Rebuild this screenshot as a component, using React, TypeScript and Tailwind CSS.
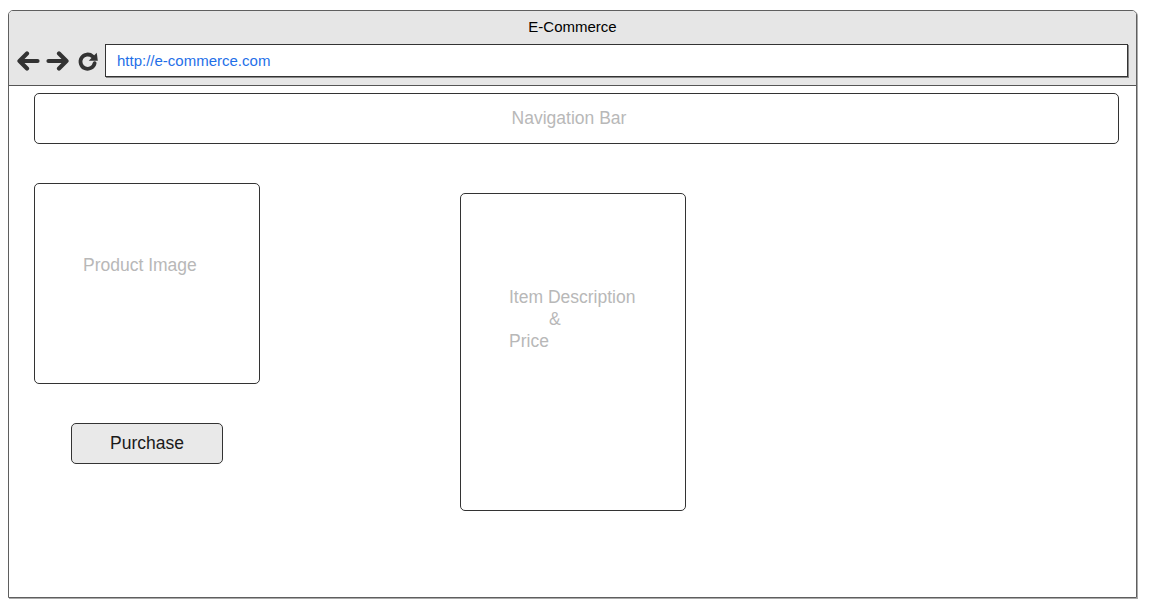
const font = { fontFamily: '"Liberation Sans", Arial, sans-serif' }

const BackIcon = () => (
    <svg width="23" height="20" viewBox="0 0 23 20" fill="none">
        <path d="M10 2.5 L2.5 10 L10 17.5 M3 10 H20.5" stroke="#333" strokeWidth="4.2" strokeLinecap="round" strokeLinejoin="round" />
    </svg>
)

const ForwardIcon = () => (
    <svg width="23" height="20" viewBox="0 0 23 20" fill="none">
        <path d="M13 2.5 L20.5 10 L13 17.5 M20 10 H2.5" stroke="#333" strokeWidth="4.2" strokeLinecap="round" strokeLinejoin="round" />
    </svg>
)

const ReloadIcon = () => (
    <svg width="21" height="21" viewBox="0 0 20 20" fill="none">
        <path d="M14.8 5.2 A6.8 6.8 0 1 0 16.8 11.5" stroke="#333" strokeWidth="3.6" strokeLinecap="round" fill="none" />
        <path d="M19.8 9.2 L11.2 9.2 L18.8 1.6 Z" fill="#333" />
    </svg>
)

export default function App() {
    return (
        <div className="w-[1149px] h-[606px] bg-white pt-[10px] pl-[8px]" style={font}>
            <div className="w-[1129px] h-[588px] border border-[#5f5f5f] rounded-t-[5px] flex flex-col overflow-hidden shadow-[1px_1px_0_#aaa]">
                {/* browser chrome */}
                <div className="h-[75px] bg-[#e6e6e6] border-b border-[#555] pt-[7px] shrink-0">
                    <div className="text-center text-[15px] leading-[18px] text-black">E-Commerce</div>
                    <div className="flex items-center mt-[8px] pl-[8px]">
                        <div className="flex items-center pt-[1px]">
                            <BackIcon />
                            <div className="ml-[6px]"><ForwardIcon /></div>
                            <div className="ml-[8px]"><ReloadIcon /></div>
                        </div>
                        <div className="ml-[7px] w-[1023px] h-[33px] bg-white border border-[#333] shadow-[1px_1px_0_#888] flex items-center pl-[11px] pt-[2px]">
                            <span className="text-[15px] text-[#1f6fe8]">http://e-commerce.com</span>
                        </div>
                    </div>
                </div>

                {/* page */}
                <div className="flex-1 bg-white pl-[25px] pt-[7px]">
                    <div className="w-[1085px] h-[51px] border border-[#333] rounded-[5px] flex items-center justify-center pr-[15px]">
                        <span className="text-[17.5px] text-[#b8b8b8]">Navigation Bar</span>
                    </div>

                    <div className="flex mt-[39px]">
                        <div className="w-[226px] flex flex-col">
                            <div className="h-[201px] border border-[#333] rounded-[5px] pl-[48px] pt-[70px]">
                                <span className="text-[17.5px] leading-[22px] text-[#b8b8b8]">Product Image</span>
                            </div>
                            <button className="ml-[37px] mt-[39px] w-[152px] h-[41px] bg-[#e9e9e9] border border-[#333] rounded-[5px] text-[17.5px] text-[#1a1a1a]">
                                Purchase
                            </button>
                        </div>

                        <div className="ml-[200px] mt-[10px] w-[226px] h-[318px] border border-[#333] rounded-[5px] pl-[48px] pt-[92px] text-[17.5px] leading-[22px] text-[#b8b8b8]">
                            <div>Item Description</div>
                            <div className="pl-[40px]">&amp;</div>
                            <div>Price</div>
                        </div>
                    </div>
                </div>
            </div>
        </div>
    )
}
